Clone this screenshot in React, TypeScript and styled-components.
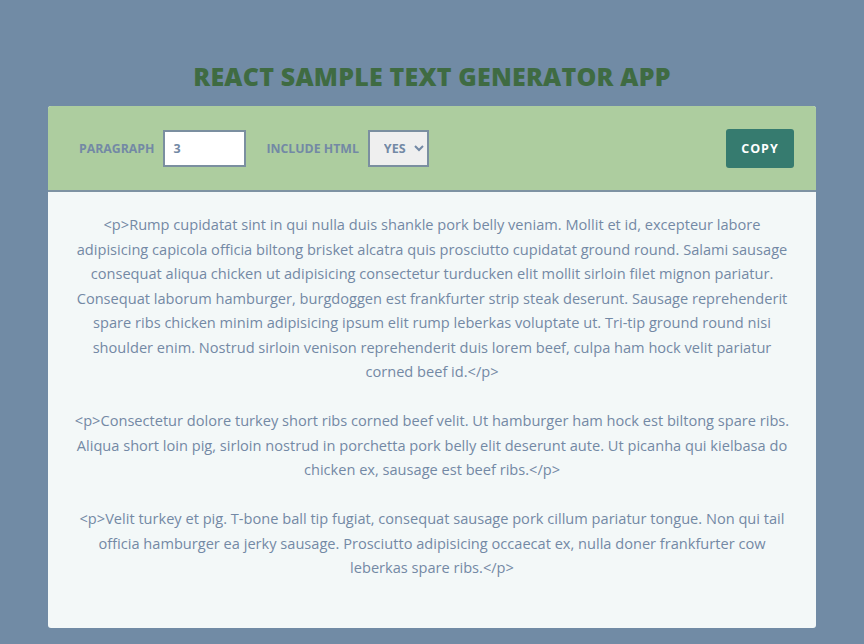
import React, { useState } from "react";
import styled, { createGlobalStyle } from "styled-components";

const Global = createGlobalStyle`
  * { box-sizing: border-box; }
  html, body { margin: 0; padding: 0; }
  body {
    background: #718ba5;
    font-family: "Open Sans", "Noto Sans", sans-serif;
    color: #7389a5;
  }
`;

const Page = styled.div`
  width: 864px;
  min-height: 644px;
  padding: 58px 48px 16px;
  display: flex;
  flex-direction: column;
  align-items: center;
`;

const Title = styled.h1`
  margin: 0 0 12px;
  font-size: 25px;
  line-height: 36px;
  font-weight: 800;
  color: #3f6b42;
  text-transform: uppercase;
  letter-spacing: 0.2px;
`;

const Card = styled.div`
  width: 768px;
  border-radius: 3px;
  overflow: hidden;
  background: #f3f8f8;
`;

const Toolbar = styled.div`
  height: 86px;
  background: #adcd9f;
  border-bottom: 2px solid #7e93a3;
  display: flex;
  align-items: center;
  padding: 0 22px 0 31px;
`;

const Field = styled.label`
  display: flex;
  align-items: center;
  gap: 9px;
  margin-right: 20px;
  font-size: 12.3px;
  font-weight: 700;
  color: #7389a5;
  text-transform: uppercase;
`;

const NumberInput = styled.input`
  width: 83px;
  height: 37px;
  border: 2px solid #7b8fa0;
  background: #fff;
  padding: 0 8px;
  font-family: inherit;
  font-size: 12.5px;
  font-weight: 700;
  color: #7389a5;
  outline: none;
`;

const Select = styled.select`
  width: 61px;
  height: 37px;
  border: 2px solid #7b8fa0;
  background: #efefef;
  padding: 0 4px 0 10px;
  font-family: inherit;
  font-size: 12.5px;
  font-weight: 700;
  color: #7389a5;
  outline: none;
`;

const CopyButton = styled.button`
  margin-left: auto;
  width: 68px;
  height: 39px;
  border: none;
  border-radius: 3px;
  background: #367b6f;
  color: #fff;
  font-family: inherit;
  font-size: 12.5px;
  font-weight: 700;
  letter-spacing: 1px;
  cursor: pointer;
`;

const Content = styled.div`
  padding: 20px 24px 24px;
  text-align: center;
`;

const Paragraph = styled.p`
  margin: 0 0 24.5px;
  font-size: 14.6px;
  line-height: 24.5px;
  color: #7389a5;
`;

const paragraphs = [
  "<p>Rump cupidatat sint in qui nulla duis shankle pork belly veniam. Mollit et id, excepteur labore adipisicing capicola officia biltong brisket alcatra quis prosciutto cupidatat ground round. Salami sausage consequat aliqua chicken ut adipisicing consectetur turducken elit mollit sirloin filet mignon pariatur. Consequat laborum hamburger, burgdoggen est frankfurter strip steak deserunt. Sausage reprehenderit spare ribs chicken minim adipisicing ipsum elit rump leberkas voluptate ut. Tri-tip ground round nisi shoulder enim. Nostrud sirloin venison reprehenderit duis lorem beef, culpa ham hock velit pariatur corned beef id.</p>",
  "<p>Consectetur dolore turkey short ribs corned beef velit. Ut hamburger ham hock est biltong spare ribs. Aliqua short loin pig, sirloin nostrud in porchetta pork belly elit deserunt aute. Ut picanha qui kielbasa do chicken ex, sausage est beef ribs.</p>",
  "<p>Velit turkey et pig. T-bone ball tip fugiat, consequat sausage pork cillum pariatur tongue. Non qui tail officia hamburger ea jerky sausage. Prosciutto adipisicing occaecat ex, nulla doner frankfurter cow leberkas spare ribs.</p>",
];

export default function App() {
  const [count, setCount] = useState("3");
  const [html, setHtml] = useState("yes");
  return (
    <>
      <Global />
      <Page>
        <Title>React Sample Text Generator App</Title>
        <Card>
          <Toolbar>
            <Field>
              Paragraph
              <NumberInput type="text" value={count} onChange={(e) => setCount(e.target.value)} />
            </Field>
            <Field>
              Include HTML
              <Select value={html} onChange={(e) => setHtml(e.target.value)}>
                <option value="yes">YES</option>
                <option value="no">NO</option>
              </Select>
            </Field>
            <CopyButton>COPY</CopyButton>
          </Toolbar>
          <Content>
            {paragraphs.map((p, i) => (
              <Paragraph key={i}>{p}</Paragraph>
            ))}
          </Content>
        </Card>
      </Page>
    </>
  );
}
